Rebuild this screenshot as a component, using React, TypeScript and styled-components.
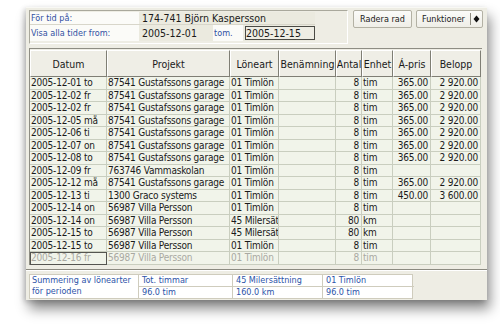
import styled, { createGlobalStyle } from 'styled-components';

type Entry = {
  datum: string;
  projekt: string;
  loneart: string;
  antal: string;
  enhet: string;
  apris?: string;
  belopp?: string;
};

const GUS = '87541 Gustafssons garage';
const VILLA = '56987 Villa Persson';

const entries: Entry[] = [
  { datum: '2005-12-01 to', projekt: GUS, loneart: '01 Timlön', antal: '8', enhet: 'tim', apris: '365.00', belopp: '2 920.00' },
  { datum: '2005-12-02 fr', projekt: GUS, loneart: '01 Timlön', antal: '8', enhet: 'tim', apris: '365.00', belopp: '2 920.00' },
  { datum: '2005-12-02 fr', projekt: GUS, loneart: '01 Timlön', antal: '8', enhet: 'tim', apris: '365.00', belopp: '2 920.00' },
  { datum: '2005-12-05 må', projekt: GUS, loneart: '01 Timlön', antal: '8', enhet: 'tim', apris: '365.00', belopp: '2 920.00' },
  { datum: '2005-12-06 ti', projekt: GUS, loneart: '01 Timlön', antal: '8', enhet: 'tim', apris: '365.00', belopp: '2 920.00' },
  { datum: '2005-12-07 on', projekt: GUS, loneart: '01 Timlön', antal: '8', enhet: 'tim', apris: '365.00', belopp: '2 920.00' },
  { datum: '2005-12-08 to', projekt: GUS, loneart: '01 Timlön', antal: '8', enhet: 'tim', apris: '365.00', belopp: '2 920.00' },
  { datum: '2005-12-09 fr', projekt: '763746 Vammaskolan', loneart: '01 Timlön', antal: '8', enhet: 'tim' },
  { datum: '2005-12-12 må', projekt: GUS, loneart: '01 Timlön', antal: '8', enhet: 'tim', apris: '365.00', belopp: '2 920.00' },
  { datum: '2005-12-13 ti', projekt: '1300 Graco systems', loneart: '01 Timlön', antal: '8', enhet: 'tim', apris: '450.00', belopp: '3 600.00' },
  { datum: '2005-12-14 on', projekt: VILLA, loneart: '01 Timlön', antal: '8', enhet: 'tim' },
  { datum: '2005-12-14 on', projekt: VILLA, loneart: '45 Milersättning', antal: '80', enhet: 'km' },
  { datum: '2005-12-15 to', projekt: VILLA, loneart: '45 Milersättning', antal: '80', enhet: 'km' },
  { datum: '2005-12-15 to', projekt: VILLA, loneart: '01 Timlön', antal: '8', enhet: 'tim' },
];

const newRow: Entry = { datum: '2005-12-16 fr', projekt: VILLA, loneart: '01 Timlön', antal: '8', enhet: 'tim' };

const COLS = '77px 123px 49px 57px 26px 31px 38px 50px';

export default function App(): JSX.Element {
  return (
    <>
      <GlobalStyle />
      <Page>
        <Window>
          <TopBar>
            <InfoBox>
              <InfoLabel>För tid på:</InfoLabel>
              <InfoValue style={{ gridColumn: '2 / 5' }}>174-741 Björn Kaspersson</InfoValue>
              <InfoLabel $last>Visa alla tider from:</InfoLabel>
              <InfoValue $last>2005-12-01</InfoValue>
              <InfoLabel $last>tom.</InfoLabel>
              <InfoInputCell>
                <DateInput>2005-12-15</DateInput>
              </InfoInputCell>
            </InfoBox>
            <Buttons>
              <Button>Radera rad</Button>
              <Button $wide>
                Funktioner
                <MenuArrow>
                  <svg width="7" height="8" viewBox="0 0 7 8">
                    <path d="M3.5 0.5 L6.5 4 L3.5 7.5 L0.5 4 Z" fill="#111" />
                  </svg>
                </MenuArrow>
              </Button>
            </Buttons>
          </TopBar>

          <TableFrame>
            <HeaderRow>
              <HeaderCell>Datum</HeaderCell>
              <HeaderCell>Projekt</HeaderCell>
              <HeaderCell>Löneart</HeaderCell>
              <HeaderCell>Benämning</HeaderCell>
              <HeaderCell>Antal</HeaderCell>
              <HeaderCell>Enhet</HeaderCell>
              <HeaderCell>Á-pris</HeaderCell>
              <HeaderCell>Belopp</HeaderCell>
            </HeaderRow>
            {entries.map((e, i) => (
              <DataRow key={i} entry={e} />
            ))}
            <DataRow entry={newRow} ghost />
          </TableFrame>

          <Separator />

          <Summary>
            <SummaryTitle>
              Summering av lönearter
              <br />
              för perioden
            </SummaryTitle>
            <SummaryCell>Tot. timmar</SummaryCell>
            <SummaryCell>45 Milersättning</SummaryCell>
            <SummaryCell>01 Timlön</SummaryCell>
            <SummaryCell $bottom>96.0 tim</SummaryCell>
            <SummaryCell $bottom>160.0 km</SummaryCell>
            <SummaryCell $bottom>96.0 tim</SummaryCell>
          </Summary>
        </Window>
      </Page>
    </>
  );
}

function DataRow({ entry, ghost }: { entry: Entry; ghost?: boolean }): JSX.Element {
  return (
    <Row $ghost={ghost}>
      <Cell $focus={ghost}>{entry.datum}</Cell>
      <Cell>{entry.projekt}</Cell>
      <Cell>{entry.loneart}</Cell>
      <Cell />
      <Cell $right>{entry.antal}</Cell>
      <Cell>{entry.enhet}</Cell>
      <Cell $right>{entry.apris}</Cell>
      <Cell $right>{entry.belopp}</Cell>
    </Row>
  );
}

const GlobalStyle = createGlobalStyle`
  body {
    margin: 0;
    background: #ffffff;
    font-family: "DejaVu Sans Condensed", "DejaVu Sans", sans-serif;
  }
`;

const Page = styled.div`
  width: 500px;
  height: 327px;
  padding: 7px 0 0 26px;
  box-sizing: border-box;
`;

const Window = styled.div`
  width: 461px;
  height: 293px;
  box-sizing: border-box;
  padding: 2px 7px 0 3px;
  background: #eeede4;
  border-top: 1px solid #f8f8f4;
  box-shadow: 3px 9px 12px rgba(0, 0, 0, 0.45), -2px 2px 5px rgba(0, 0, 0, 0.18);
  display: flex;
  flex-direction: column;
`;

const TopBar = styled.div`
  display: flex;
  align-items: flex-start;
  height: 36px;
  margin-bottom: 2px;
`;

const InfoBox = styled.div`
  width: 319px;
  height: 34px;
  box-sizing: border-box;
  border: 1px solid;
  border-color: #a9a89c #ffffff #ffffff #a9a89c;
  padding: 1px 34px 1px 0;
  display: grid;
  grid-template-columns: 109px 74px 30px 72px;
  grid-template-rows: 13px 16px;
  font-size: 9px;
`;

const InfoLabel = styled.div<{ $last?: boolean }>`
  background: #fbfbf8;
  color: #3251a3;
  padding: 0 0 0 1px;
  display: flex;
  align-items: center;
  white-space: nowrap;
  border-bottom: ${(p) => (p.$last ? 'none' : '1px solid #d8d6ca')};
`;

const InfoValue = styled.div<{ $last?: boolean }>`
  background: #ebeadf;
  color: #1a1a1a;
  font-size: 10.5px;
  padding-left: 3px;
  display: flex;
  align-items: center;
  border-bottom: ${(p) => (p.$last ? 'none' : '1px solid #d8d6ca')};
`;

const InfoInputCell = styled.div`
  background: #ebeadf;
  padding: 1px 0 1px 2px;
  display: flex;
`;

const DateInput = styled.div`
  flex: 1;
  border: 1px solid #4a4a44;
  background: #eeede4;
  font-size: 10.5px;
  color: #1a1a1a;
  display: flex;
  align-items: center;
`;

const Buttons = styled.div`
  display: flex;
  gap: 4px;
  margin-left: 5px;
`;

const Button = styled.div<{ $wide?: boolean }>`
  width: ${(p) => (p.$wide ? '67px' : '59px')};
  height: 18px;
  box-sizing: border-box;
  border: 1px solid #b3b1a4;
  border-radius: 2px;
  background: linear-gradient(#fbfbf9, #efeee7);
  font-size: 9px;
  color: #1a1a1a;
  display: flex;
  align-items: center;
  justify-content: ${(p) => (p.$wide ? 'space-between' : 'center')};
  padding: ${(p) => (p.$wide ? '0 2px 0 5px' : '0')};
`;

const MenuArrow = styled.span`
  display: flex;
  align-items: center;
  height: 12px;
  padding-left: 2px;
  border-left: 1px solid #8d8b80;
`;

const TableFrame = styled.div`
  width: 453px;
  box-sizing: border-box;
  border-top: 1px solid #8e8d83;
  border-left: 1px solid #8e8d83;
  padding-top: 1px;
  background: #eeede4;
`;

const HeaderRow = styled.div`
  display: grid;
  grid-template-columns: ${COLS};
  height: 27px;
`;

const HeaderCell = styled.div`
  box-sizing: border-box;
  border: 1px solid;
  border-color: #ffffff #7f7e74 #7f7e74 #ffffff;
  background: #efeee6;
  font-size: 10.5px;
  color: #1a1a1a;
  display: flex;
  align-items: center;
  justify-content: center;
  white-space: nowrap;
  overflow: hidden;
`;

const Row = styled.div<{ $ghost?: boolean }>`
  display: grid;
  grid-template-columns: ${COLS};
  height: 12.5px;
  color: ${(p) => (p.$ghost ? '#a9a9a2' : '#1a1a1a')};
`;

const Cell = styled.div<{ $right?: boolean; $focus?: boolean }>`
  box-sizing: border-box;
  background: #f1f4ea;
  border-right: 1px solid #c9cebf;
  border-bottom: 1px solid #c9cebf;
  outline: ${(p) => (p.$focus ? '1px solid #555550' : 'none')};
  outline-offset: -1px;
  font-size: 10px;
  letter-spacing: -0.2px;
  line-height: 11.5px;
  padding: 0 ${(p) => (p.$right ? '2px' : '0')} 0 ${(p) => (p.$right ? '0' : '1px')};
  text-align: ${(p) => (p.$right ? 'right' : 'left')};
  white-space: nowrap;
  overflow: hidden;
  text-overflow: clip;
`;

const Separator = styled.div`
  height: 1px;
  background: #8b8a80;
  border-bottom: 1px solid #ffffff;
  margin: 4px -7px 3px -3px;
`;

const Summary = styled.div`
  width: 384px;
  box-sizing: border-box;
  display: grid;
  grid-template-columns: 109px 94px 90px 91px;
  grid-template-rows: 12px 11px;
  background: #ffffff;
  border: 1px solid #cfccbd;
  font-size: 9px;
  color: #2c53a8;
`;

const SummaryTitle = styled.div`
  grid-row: 1 / 3;
  padding: 0 2px;
  line-height: 11px;
  white-space: nowrap;
  border-right: 1px solid #cfccbd;
`;

const SummaryCell = styled.div<{ $bottom?: boolean }>`
  padding-left: 3px;
  line-height: 11px;
  border-right: 1px solid #cfccbd;
  border-bottom: ${(p) => (p.$bottom ? 'none' : '1px solid #cfccbd')};
  white-space: nowrap;
  overflow: hidden;
  &:last-child,
  &:nth-child(4) {
    border-right: none;
  }
`;
